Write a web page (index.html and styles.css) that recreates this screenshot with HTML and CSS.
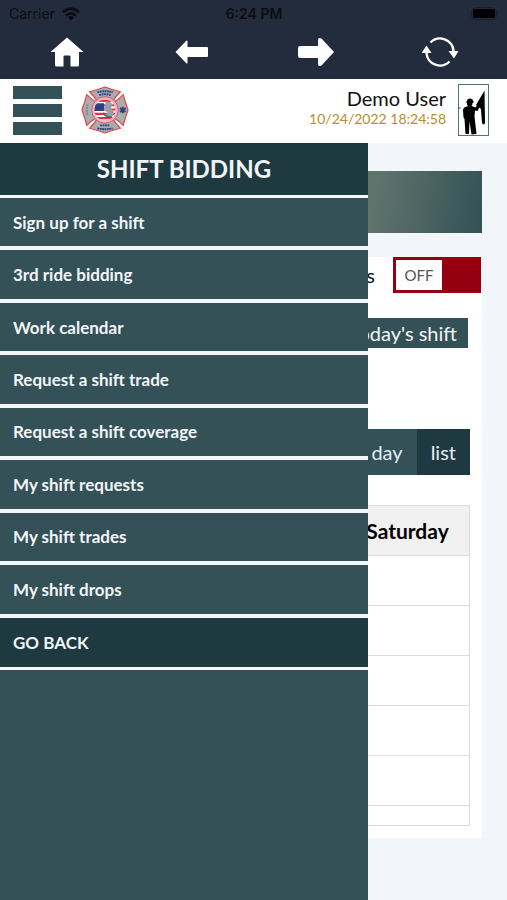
FILE: index.html
```
<!DOCTYPE html>
<html lang="en">
<head>
    <meta charset="UTF-8">
    <meta name="viewport" content="width=device-width, initial-scale=1">
    <title>Shift Bidding</title>
    <link rel="stylesheet" href="styles.css">
</head>
<body>
    <div class="app_bar">
        <div class="status">
            <div class="carrier">
                <span>Carrier</span>
                <svg width="18" height="14" viewBox="0 0 18 14">
                    <g fill="none" stroke="#0b0d12" stroke-width="2.6">
                        <path d="M1 5.2Q9 -2 17 5.2"/>
                        <path d="M4 8.6Q9 4 14 8.6"/>
                    </g>
                    <path d="M6 10.4Q9 7.8 12 10.4L9 13.6z" fill="#0b0d12"/>
                </svg>
            </div>
            <span class="clock">6:24 PM</span>
            <div class="power">
                <svg width="28" height="13" viewBox="0 0 28 13">
                    <rect x="0.5" y="0.5" width="25" height="12" rx="4" fill="none" stroke="#181e2b"/>
                    <rect x="2" y="2" width="22" height="9" rx="2" fill="#000"/>
                    <path d="M26.5 4.5q2 2 0 4z" fill="#181e2b"/>
                </svg>
            </div>
        </div>
        <nav class="browser_nav">
            <button type="button" aria-label="Home">
                <svg width="34" height="30" viewBox="0 0 34 30"><path d="M17 0.5L33.5 15H29v13q0 1.5-1.5 1.5H20.5V19.500q0-1-1-1h-5q-1 0-1 1v10H6.500Q5 29.500 5 28V15H0.500z" fill="#fff"/></svg>
            </button>
            <button type="button" aria-label="Back">
                <svg width="33" height="24" viewBox="0 0 33 24"><path d="M0.500 12L11.500 0.500Q12.500 0 12.500 1.500V7H32q1 0 1 1v8q0 1-1 1H12.500v5.500q0 1.500-1 1z" fill="#fff"/></svg>
            </button>
            <button type="button" aria-label="Forward">
                <svg width="38" height="30" viewBox="0 0 38 30"><path d="M37 15L24.500 28.500Q21 30 21 27V21H3Q1 21 1 19V11Q1 9 3 9H21V3Q21 0 24.500 1.500z" fill="#fff"/></svg>
            </button>
            <button type="button" aria-label="Reload">
                <svg width="38" height="32" viewBox="0 0 38 32">
                    <path d="M9.500 6.500A13.500 13.500 0 0 1 32.500 15M28.500 25.500A13.500 13.500 0 0 1 5.500 17" fill="none" stroke="#fff" stroke-width="2.400"/>
                    <path d="M27.500 15h10l-4.500 7.500zM0.500 17h10L5.500 9.500z" fill="#fff"/>
                </svg>
            </button>
        </nav>
    </div>

    <header class="top">
        <button type="button" class="burger" aria-label="Menu"><i></i><i></i><i></i></button>
        <a href="#" class="logo" aria-label="Fire department">
            <svg width="48" height="48" viewBox="0 0 50 50">
                <g fill="#a9adb2" stroke="#df4746" stroke-width="1.300">
                    <path id="arm" d="M9 6Q17 4 25 1Q33 4 41 6Q36 11 33 16Q25 11 17 16Q14 11 9 6z"/>
                    <use href="#arm" transform="rotate(90 25 25)"/>
                    <use href="#arm" transform="rotate(180 25 25)"/>
                    <use href="#arm" transform="rotate(270 25 25)"/>
                </g>
                <circle cx="25" cy="25" r="13.800" fill="#e6b9c2" stroke="#d7576a"/>
                <clipPath id="flag"><circle cx="25" cy="25" r="11"/></clipPath>
                <g clip-path="url(#flag)">
                    <path fill="#fff" d="M14 14h22v22H14z"/>
                    <path d="M14 15.500h22M14 20h22M14 24.500h22M14 29h22M14 33.500h22" stroke="#ee2c35" stroke-width="2.200"/>
                    <path d="M13 18h11v8H13z" fill="#2d3f86"/>
                    <path d="M26 16q6 0 7 4l-2 3 3 3q1 4-2 6-6 1-8-3 4 1 4-2-5 0-4-4z" fill="#9c9fa8"/>
                    <path d="M23 28q3 5 9 4" fill="none" stroke="#46558c" stroke-width="1.500"/>
                </g>
                <g stroke="#344579" stroke-width="2" fill="none">
                    <path d="M17 6.500q8-2 16 0" stroke-dasharray="2 0.500"/>
                    <path d="M19 9.500q6-2 12 0" stroke-dasharray="2 0.600"/>
                    <path d="M20 41h10" stroke-dasharray="2 0.500"/>
                    <path d="M17 44q8 2 16 0" stroke-dasharray="2 0.500"/>
                    <path d="M7 19q-2 6 0 12" stroke="#7b829a" stroke-dasharray="2 1"/>
                    <path d="M43.500 21.500v7M40.500 23l6 4M46.500 23l-6 4"/>
                </g>
            </svg>
        </a>
        <div class="user">
            <span class="name">Demo User</span>
            <time class="date" datetime="2022-10-24T18:24:58">10/24/2022 18:24:58</time>
        </div>
        <a href="#" class="logout" aria-label="Log out">
            <svg width="31" height="52" viewBox="0 0 31 52">
                <rect x="0.500" y="0.500" width="30" height="51" fill="#fff" stroke="#58706f"/>
                <path d="M26.500 6.500L18 21l5 4 1 14q2 3 3 0z"/>
                <path d="M9 17q0-2.500 3-2.500t3 2.500l1 1-1.500 1q0 2-1 3l4 1.500 3-4 2 1.500-3 6-2.500-.5-.5 6 2 17.500-5 .5-2-13-.5 12.500H7.500L6.500 35l-1-1.500L5 26q0-3 5-4-1.500-1.500-1-3L8 18z"/>
                <path d="M0.500 24h2" stroke="#333"/>
            </svg>
        </a>
    </header>

    <div class="page">
        <main class="content">
            <div class="banner"></div>
            <section class="card">
                <label class="switch_row" for="mode">
                    <span>s</span>
                    <span class="switch">
                        <input type="checkbox" id="mode">
                        <span class="knob">OFF</span>
                    </span>
                </label>
                <div class="today_row">
                    <button type="button" class="today">Today's shift</button>
                </div>
                <div class="views">
                    <button type="button">day</button><button type="button" class="on">list</button>
                </div>
                <table class="calendar">
                    <thead>
                        <tr><td></td><th scope="col">Saturday</th></tr>
                    </thead>
                    <tbody>
                        <tr><td></td><td></td></tr>
                        <tr><td></td><td></td></tr>
                        <tr><td></td><td></td></tr>
                        <tr><td></td><td></td></tr>
                        <tr><td></td><td></td></tr>
                        <tr class="short"><td></td><td></td></tr>
                    </tbody>
                </table>
            </section>
        </main>

        <nav class="menu">
            <h1>SHIFT BIDDING</h1>
            <ul>
                <li><a href="#">Sign up for a shift</a></li>
                <li><a href="#">3rd ride bidding</a></li>
                <li><a href="#">Work calendar</a></li>
                <li><a href="#">Request a shift trade</a></li>
                <li><a href="#">Request a shift coverage</a></li>
                <li><a href="#">My shift requests</a></li>
                <li><a href="#">My shift trades</a></li>
                <li><a href="#">My shift drops</a></li>
                <li class="back"><a href="#">GO BACK</a></li>
            </ul>
        </nav>
    </div>
</body>
</html>
```
FILE: styles.css
```
*{
    margin:0;
    padding:0;
    box-sizing:border-box;
}
body{
    min-height:100vh;
    display:flex;
    flex-direction:column;
    background-color:#f2f5fa;
    font-family:Lato, "Open Sans", sans-serif;
    color:#111;
}
button{
    border:0;
    background:none;
    font:inherit;
    color:inherit;
    cursor:pointer;
}
a{
    color:inherit;
    text-decoration:none;
}
svg{
    display:block;
}

/* status line and browser buttons */
.app_bar{
    background-color:#232c3d;
}
.status{
    display:grid;
    grid-template-columns:1fr auto 1fr;
    align-items:center;
    height:27px;
    padding:0 8px 0 9px;
    font-family:Inter, "Liberation Sans", sans-serif;
    font-size:14px;
    color:#0b0d12;
}
.carrier{
    display:flex;
    align-items:center;
    gap:7px;
}
.clock{
    font-weight:600;
}
.power{
    justify-self:end;
}
.browser_nav{
    display:grid;
    grid-template-columns:repeat(4, 1fr);
    height:52px;
    padding:0 5px;
}
.browser_nav button{
    display:flex;
    align-items:center;
    justify-content:center;
    padding-bottom:3px;
}

.top{
    display:flex;
    align-items:center;
    height:64px;
    padding:0 18px 2px 13px;
    background-color:#fff;
}
.burger{
    display:flex;
    flex-direction:column;
    gap:5px;
    width:49px;
}
.burger i{
    width:100%;
    height:13px;
    background-color:#335156;
}
.logo{
    margin-left:19px;
}
.user{
    display:flex;
    flex-direction:column;
    align-items:flex-end;
    margin-left:auto;
    padding-bottom:5px;
}
.name{
    font-size:20px;
    line-height:22px;
}
.date{
    font-size:14px;
    line-height:20px;
    color:#b98d2c;
}
.logout{
    margin-left:12px;
}

/* page under the menu */
.page{
    position:relative;
    flex:1;
}
.content{
    padding:28px 25px;
}
.banner{
    height:62px;
    margin-bottom:24px;
    background:linear-gradient(100deg, #335156 0%, #66776f 65%, #5f736d 76%, #335156 100%);
}
.card{
    padding-bottom:12px;
    background-color:#fff;
}
.switch_row{
    display:flex;
    align-items:center;
    justify-content:flex-end;
    gap:18px;
    padding-right:1px;
    font-size:20px;
}
.switch{
    display:flex;
    position:relative;
    width:88px;
    height:36px;
    padding:3px;
    background-color:#950010;
}
.switch input{
    position:absolute;
    inset:0;
    appearance:none;
    cursor:pointer;
}
.knob{
    width:46px;
    background-color:#fff;
    font-size:15px;
    line-height:30px;
    text-align:center;
    color:#555;
}
.today_row{
    display:flex;
    justify-content:flex-end;
    padding:25px 14px 0;
}
.today{
    height:30px;
    padding:0 11px;
    background-color:#335156;
    font-size:20px;
    color:#f2f5fa;
}
.views{
    display:flex;
    justify-content:flex-end;
    padding:81px 12px 30px;
}
.views button{
    height:46px;
    padding:0 14px;
    background-color:#335156;
    font-size:20px;
    color:#e3edf6;
}
.views .on{
    background-color:#1e3a40;
}
.calendar{
    width:calc(100% - 24px);
    margin:0 12px;
    border-collapse:collapse;
    table-layout:fixed;
}
.calendar th,
.calendar td{
    height:50px;
    border:1px solid #ddd;
}
.calendar thead th,
.calendar thead td{
    background-color:#f0f0f0;
}
.calendar th{
    width:124px;
    font-size:21px;
    color:#000;
}
.calendar .short td{
    height:20px;
}

/* slide-out menu */
.menu{
    position:absolute;
    top:0;
    left:0;
    bottom:0;
    width:368px;
    max-width:100%;
    background-color:#335156;
    color:#f2f5fa;
}
.menu h1{
    border-bottom:3px solid #f2f5fa;
    background-color:#1e3a40;
    font-size:24px;
    line-height:52px;
    text-align:center;
}
.menu ul{
    display:grid;
    grid-auto-rows:1fr;
    min-height:472px;
    list-style:none;
}
.menu li{
    display:flex;
    border-bottom:4px solid #f2f5fa;
}
.menu li a{
    flex:1;
    display:flex;
    align-items:center;
    padding:0 13px;
    font-size:17px;
    font-weight:bold;
}
.menu .back{
    border-bottom-width:3px;
    background-color:#1e3a40;
}
```
